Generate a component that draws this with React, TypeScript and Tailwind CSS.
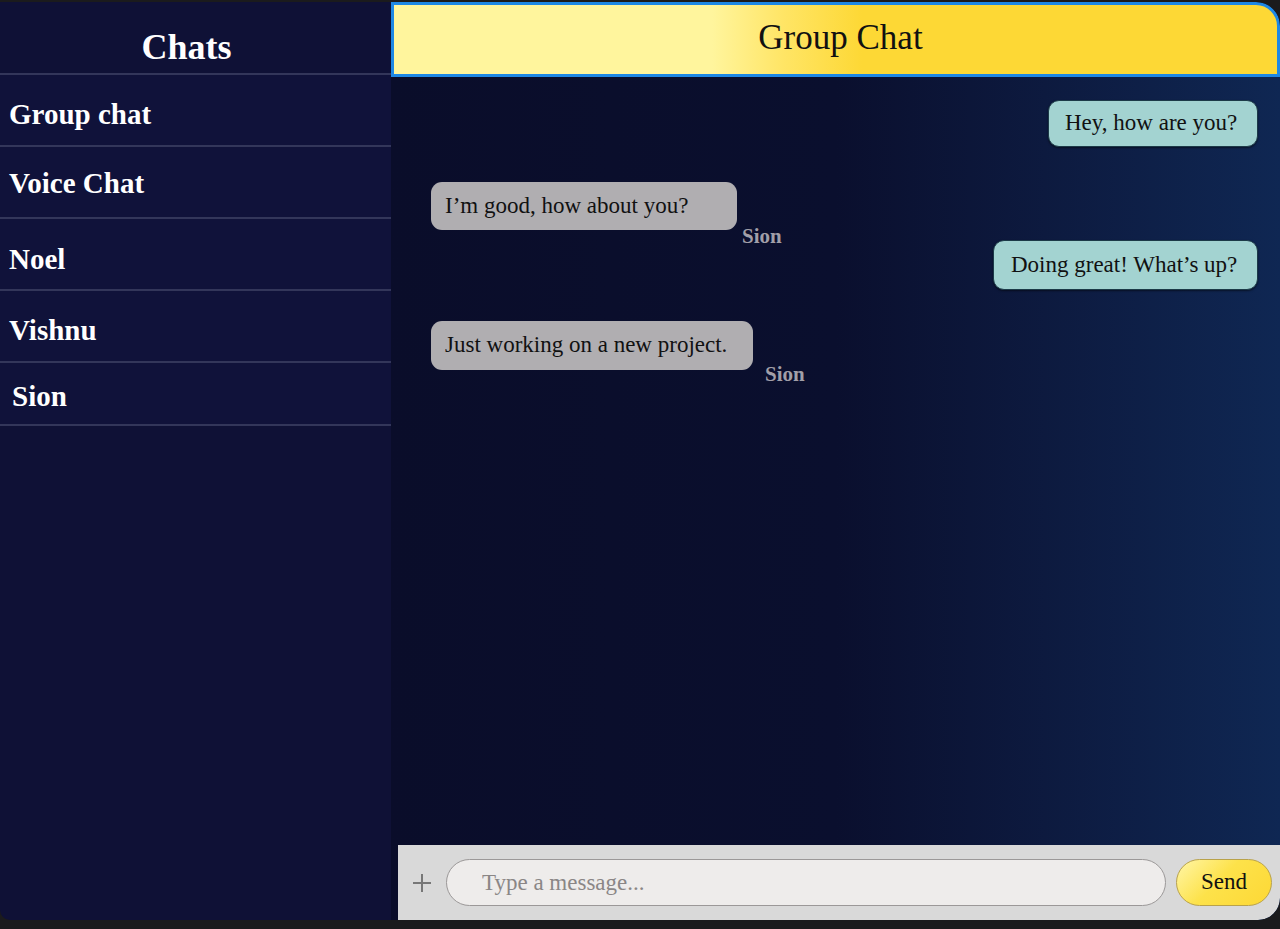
import { useState } from "react";

type Message = {
  id: number;
  text: string;
  mine: boolean;
  sender?: string;
  rowClass: string;
  bubbleClass: string;
  labelClass?: string;
};

const chats = [
  { name: "Group chat", rowClass: "h-[72px] pl-[9px] pt-[8px]" },
  { name: "Voice Chat", rowClass: "h-[72px] pl-[9px] pt-[3px]" },
  { name: "Noel", rowClass: "h-[72px] pl-[9px] pt-[10px]" },
  { name: "Vishnu", rowClass: "h-[72px] pl-[9px] pt-[8px]" },
  { name: "Sion", rowClass: "h-[63px] pl-[12px] pt-[6px]" },
];

const messages: Message[] = [
  {
    id: 1,
    text: "Hey, how are you?",
    mine: true,
    rowClass: "mt-0",
    bubbleClass: "h-[47px] w-[210px] pl-[16px]",
  },
  {
    id: 2,
    text: "I\u2019m good, how about you?",
    mine: false,
    sender: "Sion",
    rowClass: "mt-[35px]",
    bubbleClass: "h-[48px] w-[306px] pl-[14px]",
    labelClass: "ml-[5px] -mb-[18px]",
  },
  {
    id: 3,
    text: "Doing great! What\u2019s up?",
    mine: true,
    rowClass: "mt-[10px]",
    bubbleClass: "h-[50px] w-[265px] pl-[17px]",
  },
  {
    id: 4,
    text: "Just working on a new project.",
    mine: false,
    sender: "Sion",
    rowClass: "mt-[31px]",
    bubbleClass: "h-[49px] w-[322px] pl-[14px]",
    labelClass: "ml-[12px] -mb-[16px]",
  },
];

export default function App() {
  const [draft, setDraft] = useState("");

  return (
    <div className="h-[929px] w-[1280px] bg-[#1b1b1d] pt-[2px] font-['Liberation_Serif',serif]">
      <div className="flex h-[918px] overflow-hidden rounded-tr-[24px] rounded-br-[22px] rounded-bl-[10px]">
        {/* Sidebar */}
        <aside className="flex w-[391px] shrink-0 flex-col bg-[#0f1136]">
          <div className="flex h-[73px] items-center justify-center border-b-2 border-[#33365a] pr-[18px] pt-[18px]">
            <h1 className="text-[36px] font-bold leading-none text-white">Chats</h1>
          </div>
          {chats.map((chat) => (
            <div
              key={chat.name}
              className={`flex items-center border-b-2 border-[#33365a] bg-[#10123a] text-[29px] font-bold leading-none text-white ${chat.rowClass}`}
            >
              {chat.name}
            </div>
          ))}
        </aside>

        {/* Main */}
        <main className="flex flex-1 flex-col bg-gradient-to-r from-[#0a0d2a] via-[#0a0f2e] to-[#0f2753]">
          <header className="flex h-[75px] shrink-0 items-center justify-center rounded-tr-[24px] border-[3px] border-[#1e88e5] bg-[linear-gradient(to_right,#fff59d_0%,#fff59d_36%,#ffe566_44%,#fdd835_53%,#fdd835_100%)] pb-[4px] pl-[10px]">
            <span className="text-[35px] leading-none text-[#111]">Group Chat</span>
          </header>

          <section className="flex flex-1 flex-col pl-[40px] pr-[22px] pt-[23px]">
            {messages.map((m) =>
              m.mine ? (
                <div key={m.id} className={`flex justify-end ${m.rowClass}`}>
                  <div
                    className={`flex items-center rounded-[11px] border border-[#1c3a48] bg-[#a3d3d1] text-[23px] text-[#111] shadow-[0_1px_2px_rgba(0,0,0,0.5)] ${m.bubbleClass}`}
                  >
                    {m.text}
                  </div>
                </div>
              ) : (
                <div key={m.id} className={`flex items-end ${m.rowClass}`}>
                  <div
                    className={`flex items-center rounded-[11px] bg-[#b0aeb1] text-[23px] text-[#111] ${m.bubbleClass}`}
                  >
                    {m.text}
                  </div>
                  <span
                    className={`text-[21px] font-bold leading-[24px] text-[#a19fa8] ${m.labelClass}`}
                  >
                    {m.sender}
                  </span>
                </div>
              )
            )}
          </section>

          <footer className="ml-[7px] flex h-[75px] shrink-0 items-center rounded-br-[22px] bg-[#d9d9d9] pl-[13px] pr-[8px]">
            <button className="flex h-[30px] w-[22px] items-center justify-center text-[#777]">
              <svg width="20" height="20" viewBox="0 0 20 20" fill="none" stroke="currentColor" strokeWidth="2">
                <path d="M10 1v18M1 10h18" />
              </svg>
            </button>
            <input
              value={draft}
              onChange={(e) => setDraft(e.target.value)}
              placeholder="Type a message..."
              className="ml-[13px] h-[47px] flex-1 rounded-full border border-[#9b9898] bg-[#eeeceb] pl-[35px] text-[23px] text-[#333] outline-none placeholder:text-[#8a8686]"
            />
            <button className="ml-[10px] h-[47px] w-[96px] rounded-full border border-[#b9a24a] bg-[linear-gradient(135deg,#fff6a8_0%,#fde24a_45%,#fdd835_100%)] text-[23px] text-[#111]">
              Send
            </button>
          </footer>
        </main>
      </div>
    </div>
  );
}
